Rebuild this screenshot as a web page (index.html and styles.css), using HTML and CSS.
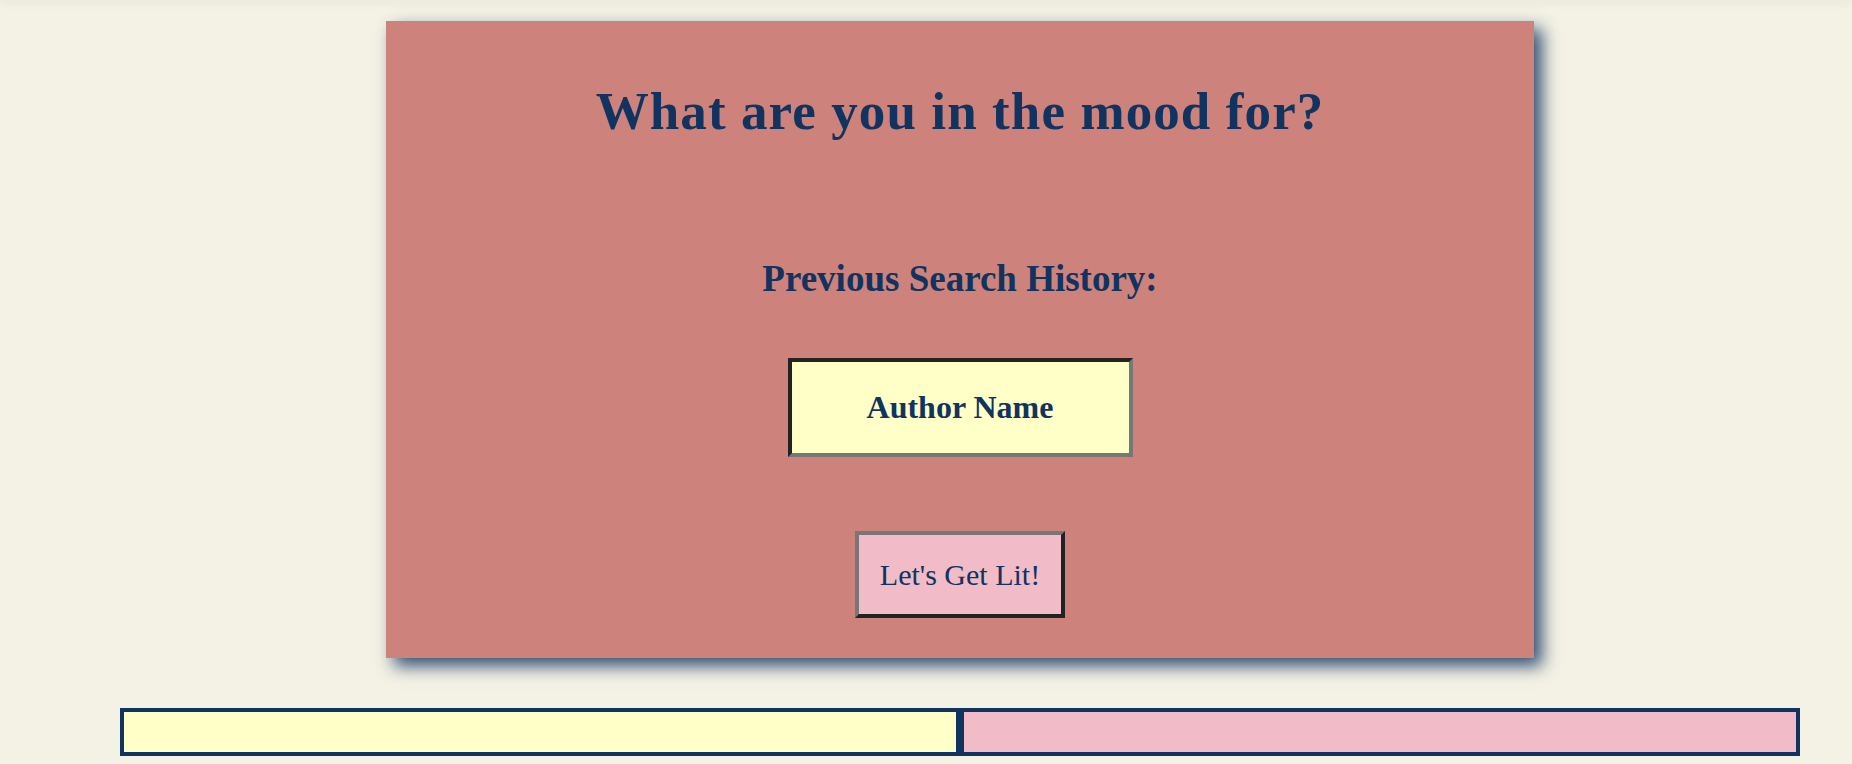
FILE: index.html
```html
<!DOCTYPE html>
<html lang="en">
<head>
<meta charset="utf-8">
<title>What are you in the mood for?</title>
<link rel="stylesheet" href="styles.css">
</head>
<body>
<div class="topbar"></div>
<div class="page">
  <section class="card">
    <h1 class="title">What are you in the mood for?</h1>
    <h2 class="subtitle">Previous Search History:</h2>
    <button class="history-btn">Author Name</button>
    <button class="lit-btn">Let's Get Lit!</button>
  </section>
  <div class="results">
    <div class="result result-yellow"></div>
    <div class="result result-pink"></div>
  </div>
</div>
</body>
</html>
```
FILE: styles.css
```css
html, body {
  margin: 0;
  padding: 0;
  overflow: hidden;
  background: #f4f2e5;
}
body {
  font-family: "Liberation Serif", "Times New Roman", serif;
  color: #10335f;
}
.topbar {
  height: 0;
  box-shadow: 0 1px 9px 1px rgba(0, 0, 0, 0.14);
  position: relative;
}
.page {
  width: 1920px;
  display: flex;
  flex-direction: column;
  align-items: center;
  padding-top: 21px;
}
.card {
  width: 1148px;
  height: 637px;
  box-sizing: border-box;
  background: #cd827b;
  box-shadow: 8px 8px 16px rgba(16, 51, 95, 0.85);
  display: flex;
  flex-direction: column;
  align-items: center;
  padding-top: 61px;
}
.title {
  margin: 0;
  font-size: 53px;
  line-height: 59px;
  font-weight: bold;
  letter-spacing: 1.1px;
  color: #10335f;
}
.subtitle {
  margin: 117px 0 0;
  font-size: 37px;
  line-height: 41px;
  font-weight: bold;
  color: #10335f;
}
.history-btn {
  margin-top: 59px;
  width: 345px;
  height: 99px;
  box-sizing: border-box;
  background: #ffffc8;
  border: 4px solid;
  border-color: #222 #777 #777 #222;
  font-family: "Liberation Serif", "Times New Roman", serif;
  font-weight: bold;
  font-size: 32px;
  color: #10335f;
  padding: 0;
}
.lit-btn {
  margin-top: 74px;
  width: 210px;
  height: 87px;
  box-sizing: border-box;
  background: #f1bcc8;
  border: 4px solid;
  border-color: #777 #222 #222 #777;
  font-family: "Liberation Serif", "Times New Roman", serif;
  font-weight: normal;
  font-size: 30px;
  color: #10335f;
  padding: 0;
}
.results {
  margin-top: 50px;
  width: 1680px;
  display: flex;
}
.result {
  flex: 1;
  height: 48px;
  box-sizing: border-box;
  border: 4px solid #10335f;
}
.result-yellow {
  background: #ffffc8;
}
.result-pink {
  background: #f1bcc8;
}
```
